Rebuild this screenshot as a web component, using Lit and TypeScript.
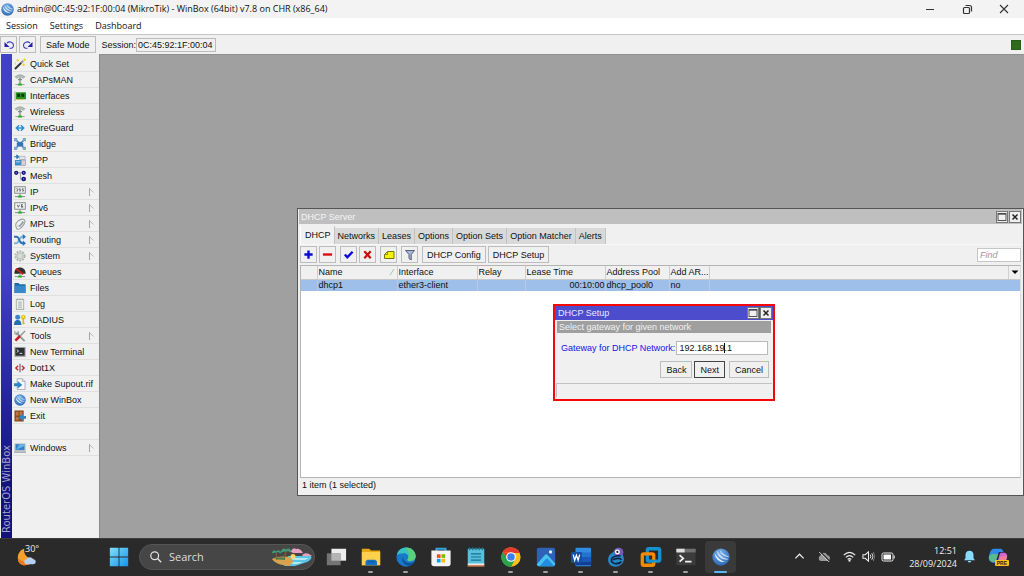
import { LitElement, html, svg, css, TemplateResult } from "lit";
import { customElement, property } from "lit/decorators.js";
import { classMap } from "lit/directives/class-map.js";

/* ---------- icon drawings, keyed by name: [viewBox size, shapes] ---------- */
const antenna = svg`<path d="M2.500 4.500Q6.500 1.500 10.500 4.500M1 3.500Q6.500-1.500 12 3.500" fill="none" stroke="#a3afa9" stroke-width="1.500"/><path d="M4.500 6.500q2-2 4 0M6.500 4v7" fill="none" stroke="#7f8c85" stroke-width="1.400"/><path d="M1.500 11.500h10" stroke="#8fa097" stroke-width="1"/><path d="M4.500 10.300h4v2.200h-4z" fill="#2db01f"/>`;
const ipBase = svg`<rect x=".8" y=".8" width="11.400" height="7" fill="#f4f6f5" stroke="#7b8781"/><path d="M6.500 8v3M1 11.500h11" stroke="#7b8781"/><path d="M4.500 10.300h4v2.200h-4z" fill="#2db01f"/>`;
const disc = svg`<defs><radialGradient id="dg" cx=".45" cy=".3" r=".75"><stop offset="0" stop-color="#7db4ec"/><stop offset="1" stop-color="#2464b4"/></radialGradient></defs><circle cx="12" cy="12" r="11.500" fill="url(#dg)"/><path d="M3.500 6.500C4 14 10 20 19 18.500c-6-.5-12-5-15.500-12z" fill="#eaf3fc"/><path d="M7 4.500c1 7 6 11 14 10.500-6-1-11-4.500-14-10.500zM11 3.500c1 4.500 5 7.500 11 8-5-1.500-9-4.500-11-8z" fill="#d4e5f7" stroke="#d4e5f7" stroke-width=".6"/>`;

const ICONS: Record<string, [number, TemplateResult | ReturnType<typeof svg>]> = {
  wand: [13, svg`<path d="M1 12L8 5" stroke="#333" stroke-width="2.200"/><path d="M7.500 5.500L10 3" stroke="#999" stroke-width="2.200"/><path d="M4 1v3M2.500 2.500h3M10.500 6v3M9 7.500h3M11.500.5v3M10 2h3M1.500 5v2" stroke="#e8d219" stroke-width="1"/>`],
  antenna: [13, antenna],
  nic: [13, svg`<path d="M1 1.500v10.500" stroke="#b9bfba" stroke-width="1.500"/><rect x="2" y="2.500" width="11" height="7.500" fill="#23951c"/><rect x="3.500" y="4" width="3" height="3.500" fill="#0b3b0b"/><rect x="8" y="4" width="3" height="3.500" fill="#0b3b0b"/><path d="M3 10.200h7" stroke="#d0b73c"/>`],
  arrows: [13, svg`<path d="M5.500 3.500L2.500 6.500l3 3M7.500 3.500l3 3-3 3M3 6.500h7" fill="none" stroke="#2c8fd6" stroke-width="1.600"/>`],
  bridge: [13, svg`<path d="M1.500 1.500l10 10M11.500 1.500l-10 10" stroke="#4a88bd" stroke-width="1.700"/><path d="M0 0h3.500v3.500H0zM9.500 0H13v3.500H9.500zM0 9.500h3.500V13H0zM9.500 9.500H13V13H9.500z" fill="#7ba9cf"/><path d="M3 5.500L6.500 4 10 5.500v3L6.500 9.500 3 8z" fill="#2f76b4"/>`],
  ppp: [13, svg`<path d="M0 3h4M3 1l2.500 2L3 5z" fill="#2a77b5" stroke="#2a77b5"/><path d="M6 2.500h6V6H6z" fill="#e3e7ea" stroke="#98a3ab" stroke-width=".7"/><rect x="1" y="6.500" width="6.500" height="6" fill="#3b8bc6"/><path d="M2 8.500h4.500" stroke="#bfe0f5"/><rect x="8" y="6.500" width="4.500" height="6" fill="#cdd3d7" stroke="#8d989f" stroke-width=".7"/>`],
  mesh: [13, svg`<path d="M3 3h7M7 3v7h3" fill="none" stroke="#888" stroke-width=".8"/><g fill="#12127e"><circle cx="2.400" cy="3" r="2.300"/><circle cx="10.500" cy="3" r="2.300"/><circle cx="10.500" cy="9.800" r="2.500"/></g><g fill="#8a93d8"><circle cx="2.400" cy="3" r=".8"/><circle cx="10.500" cy="3" r=".8"/><circle cx="10.500" cy="9.800" r=".8"/></g>`],
  ip: [13, svg`${ipBase}<path d="M2.500 3H4v2.500H2.500M5.500 5.500H7.200V4.200H5.700V3h1.500M8.700 5.500h1.600V4.200H8.900V3h1.500" fill="none" stroke="#555" stroke-width=".8"/>`],
  ipv6: [13, svg`${ipBase}<path d="M3.500 3l1.200 2.700L6 3M9.500 2.700H8v3h1.500V4.300H8" fill="none" stroke="#444" stroke-width=".8"/>`],
  mpls: [13, svg`<path d="M2 8.500C1 5 7 0 10.500 1.500S10 9.500 6.500 11.500 2.500 11 2 8.500zM4 9c1.500 0 5-3 5.500-5.500M6 9.500l4.500-5" fill="none" stroke="#97a39c" stroke-width="1.200"/>`],
  routing: [13, svg`<path d="M0 10h2.500C6 10 5 3 9 3h1" fill="none" stroke="#7db3da" stroke-width="2"/><path d="M0 3h3c3 0 2 7 6 7h1" fill="none" stroke="#2873b5" stroke-width="2"/><path d="M9.500 0L13 3 9.500 6zM9.500 7l3.500 3-3.500 3z" fill="#2873b5"/>`],
  gear: [13, svg`<circle cx="6.500" cy="6.500" r="5" fill="none" stroke="#a9b4ad" stroke-width="2" stroke-dasharray="2 1.200"/><circle cx="6.500" cy="6.500" r="3.500" fill="#dce1de" stroke="#a9b4ad"/><circle cx="6.500" cy="6.500" r="1.300" fill="#fff" stroke="#a9b4ad" stroke-width=".6"/>`],
  queues: [13, svg`<path d="M.5 8.500C0 4 3 1.500 6.500 1.500S13 4 12.500 8.500z" fill="#2f2f31"/><path d="M2 3l8 6" stroke="#c2241c" stroke-width="2.200"/><path d="M6.500 8v3M1 11.500h11" stroke="#7d8984"/><path d="M4.500 10.300h4v2.200h-4z" fill="#2db01f"/>`],
  folder: [13, svg`<path d="M.5 1h4.500l1 1.500h6.500V12H.5z" fill="#1c6aa8"/><path d="M.5 4h12v8H.5z" fill="#3a88c8"/>`],
  log: [13, svg`<rect x="2.500" y="1.500" width="8" height="11" fill="#eef1ef" stroke="#a3ada7"/><path d="M4.500 4.500h4M4.500 6.500h4M4.500 8.500h4M4.500 10.500h4" stroke="#8d9a92" stroke-width=".8"/><path d="M4 0v2.500M6.500 0v2.500M9 0v2.500" stroke="#a3ada7" stroke-width=".8"/>`],
  radius: [13, svg`<circle cx="4" cy="3.500" r="2.700" fill="#3a87c8"/><path d="M0 12c0-4 1.500-5.500 4-5.500S8 8 8 12z" fill="#2470b0"/><circle cx="10" cy="3.500" r="2.600" fill="#dcca1d"/><circle cx="10" cy="3" r=".8" fill="#fff"/><path d="M10 5v6M10 10h1.500" stroke="#c9b410" stroke-width="1.400"/>`],
  tools: [13, svg`<path d="M2.500 3l9 9" stroke="#8f9a96" stroke-width="2"/><path d="M1 1v3l2 1 2-2-1-2" fill="none" stroke="#8f9a96" stroke-width="1.200"/><path d="M12 1L6 7" stroke="#8a9490" stroke-width="1.400"/><path d="M6.500 6.500l-5 5" stroke="#c8202a" stroke-width="2.800"/>`],
  terminal: [13, svg`<rect x=".3" y="1" width="12.400" height="11" fill="#aab0b0"/><rect x="1.500" y="2" width="10" height="8.500" fill="#2d3030"/><path d="M3 4l2 1.500L3 7M6 8h3" fill="none" stroke="#fff" stroke-width=".9"/>`],
  dot1x: [13, svg`<path d="M4.500 4L2 6.500 4.500 9M8.500 4L11 6.500 8.500 9" fill="none" stroke="#c1282d" stroke-width="1.500"/><path d="M6.500 2v9" stroke="#666" stroke-width="1.300"/>`],
  supout: [13, svg`<path d="M3.500.8h5.500l3 3v8.700H3.500z" fill="#f6f8f9" stroke="#9aa5ad" stroke-width=".9"/><path d="M9 .8v3h3" fill="none" stroke="#9aa5ad" stroke-width=".8"/><path d="M0 5.800h4V3.300L9 7.500 4 11.500V9H0z" fill="#2b86c6"/>`],
  disc: [24, disc],
  exit: [13, svg`<rect x=".5" y=".5" width="10" height="12" fill="#8a4a22"/><path d="M2 2h3v4H2zM6 2h3v4H6zM2 7.500h3V11H2z" fill="#b97646"/><path d="M13 6.500H9.500V4L5 8l4.500 4V9.500H13z" fill="#2b86c6"/>`],
  monitor: [13, svg`<rect x=".5" y="1.500" width="12" height="8.500" fill="#b5bdc2"/><rect x="1.800" y="2.500" width="9.400" height="6" fill="#2883c8"/><path d="M2 8.500l4-6h5v2z" fill="#6ab4e6"/><path d="M0 11h13" stroke="#9da6ab" stroke-width="1.500"/>`],
  undo: [12, svg`<path d="M4 4C6.500 1.800 10.500 3.200 10.500 6.200S8 9.500 6.500 9.200" fill="none" stroke="#3a3ab4" stroke-width="1.100"/><path d="M1.500 3v5h5z" fill="#2222a8"/>`],
  redo: [12, svg`<path d="M8 4C5.500 1.800 1.500 3.200 1.500 6.200S4 9.500 5.500 9.200" fill="none" stroke="#3a3ab4" stroke-width="1.100"/><path d="M10.500 3v5h-5z" fill="#2222a8"/>`],
  plus: [12, svg`<path d="M6 1.500v9M1.500 6h9" stroke="#0a0ad0" stroke-width="2.600"/>`],
  minus: [12, svg`<path d="M1 6h10" stroke="#d40f0f" stroke-width="2.600"/>`],
  check: [12, svg`<path d="M2 6l2.700 3L10.500 3" fill="none" stroke="#0a0ae0" stroke-width="2.600"/>`],
  cross: [12, svg`<path d="M2.500 2.500l7 7.500M9.500 2.500l-7 7.500" stroke="#cc0d0d" stroke-width="2.400"/>`],
  note: [12, svg`<path d="M1.500 9.500V5.500l3-3h6.500v7z" fill="#f7f300" stroke="#77741c"/><path d="M1.500 5.500h3v-3" fill="none" stroke="#77741c" stroke-width=".8"/>`],
  filter: [12, svg`<path d="M1.500 1.500h9L7.200 5.500v5.500L5 9.500v-4z" fill="#a9b6df" stroke="#59606e" stroke-width="1"/>`],
  max: [10, svg`<rect x="1" y="1.500" width="8" height="7" fill="none" stroke="#444" stroke-width=".9"/><path d="M1 2h8" stroke="#444" stroke-width="1.300"/>`],
  close: [10, svg`<path d="M2.500 2.500l5 5M7.500 2.500l-5 5" stroke="#222" stroke-width="1.500"/>`],
  down: [10, svg`<path d="M1.500 3.500h7L5 7z" fill="#000"/>`],
  winmin: [12, svg`<path d="M2 6.500h8" stroke="#333"/>`],
  winmax: [12, svg`<rect x="2.500" y="4.500" width="6" height="6" rx="1" fill="none" stroke="#333" stroke-width="1.200"/><path d="M4.500 2.500h4a2 2 0 012 2v4" fill="none" stroke="#333" stroke-width="1.200"/>`],
  winclose: [12, svg`<path d="M2 2l8 8M10 2l-8 8" stroke="#333" stroke-width="1.100"/>`],
  sub: [8, svg`<path d="M2.500 0v8" stroke="#a4a4a4" stroke-width="1"/><path d="M2.500.5L6.500 4.500" stroke="#b8b8b8" stroke-width=".9"/>`],
  sort: [8, svg`<path d="M2 7L6 1" stroke="#aaa" stroke-width=".8"/>`],
  weather: [24, svg`<path d="M9 3C8 9 12 14 19 14c-1 5-5 7-9 7C5 21 2 17.500 2 13S4.500 4 9 3z" fill="#f5a02c"/><path d="M2 13c0 5 3 8 8 8 4 0 8-2 9-7-4 4-11 5-17-1z" fill="#ec7a1c"/><path d="M11 20a2.800 2.800 0 01.5-5.500c1-3 6-3 7 0 3.500-.5 4.500 5.500 0 5.500z" fill="#b5d0f2"/>`],
  start: [24, svg`<defs><linearGradient id="wg" x1="0" y1="0" x2="1" y2="1"><stop offset="0" stop-color="#7fe0fb"/><stop offset="1" stop-color="#1593ea"/></linearGradient></defs><path d="M2 2h9.500v9.500H2zM12.500 2H22v9.500h-9.500zM2 12.500h9.500V22H2zM12.500 12.500H22V22h-9.500z" fill="url(#wg)"/>`],
  search: [16, svg`<circle cx="7" cy="7" r="4.800" fill="none" stroke="#e4e4e4" stroke-width="1.500"/><path d="M10.500 10.500L15 15" stroke="#e4e4e4" stroke-width="1.600"/>`],
  taskview: [24, svg`<rect x="7" y="3" width="16" height="13" fill="#eee"/><rect x="2" y="8" width="15" height="13" fill="#7c7c7c" opacity=".9"/><path d="M7 8h10v8H7z" fill="#b4b4b4"/>`],
  explorer: [24, svg`<path d="M2 3h8l2 2h10v16H2z" fill="#e9a90d"/><path d="M2 6.500h20V21H2z" fill="#ffd04c"/><path d="M6 21v-4.500l2-1.500h8.500l2 1.500V21z" fill="#1273c4"/><path d="M9 17.500h6.500" stroke="#0a4f92"/>`],
  edge: [24, svg`<circle cx="12" cy="12" r="10.500" fill="#1a78c9"/><path d="M2 10C3 4 8 1.500 12 1.500c6.500 0 10.500 4.500 10.500 9.500 0 4-3 5.500-6.500 5.500-2 0-3-1-2-2.500 2-3-1-6-4-6-4 0-7 1-8 2z" fill="#37c2c4"/><path d="M12 1.500c6.500 0 10.500 4.500 10.500 9.500 0 4-3 5.500-6.500 5.500-2 0-3-1-2-2.500 3-5 0-9-2-12.500z" fill="#5bd07c"/><path d="M8.500 12c-2 5 2 9.500 8 9.500 2-1 4-2 4.500-4-6 3-12 0-12.500-5.500z" fill="#0c4f9b"/>`],
  store: [24, svg`<path d="M7 6V3h10v3" fill="none" stroke="#35a6dd" stroke-width="2"/><path d="M1.500 5h21v14a3 3 0 01-3 3h-15a3 3 0 01-3-3z" fill="#f3f3f3"/><path d="M7.500 9h4v4h-4z" fill="#f25022"/><path d="M12.500 9h4v4h-4z" fill="#7fba00"/><path d="M7.500 14h4v4h-4z" fill="#00a4ef"/><path d="M12.500 14h4v4h-4z" fill="#ffb900"/>`],
  notepad: [24, svg`<path d="M3 3h18v17H3z" fill="#58c0dc"/><path d="M3 19h18v3H3z" fill="#e8e8e8"/><path d="M3 21h18v1.500H3z" fill="#c96a32"/><path d="M5 1.500v3M8.500 1.500v3M12 1.500v3M15.500 1.500v3M19 1.500v3" stroke="#1c7892" stroke-width="1.600"/><path d="M6.500 8.500h11M6.500 12h11M6.500 15.500h11" stroke="#14708c" stroke-width="1.300"/>`],
  chrome: [24, svg`<circle cx="12" cy="12" r="10.500" fill="#fbc116"/><path d="M3 6.500A10.500 10.500 0 0121.500 7.500H12z" fill="#e33b2e"/><path d="M3 6.500A10.500 10.500 0 0012 22.500l4.300-8-8.500 0z" fill="#2ba24c"/><path d="M3 6.500l5 8 4-7z" fill="#e33b2e"/><path d="M3 6.500A10.500 10.500 0 0012 22.500l3-6-7-2z" fill="#2ba24c"/><circle cx="12" cy="12" r="5.300" fill="#fff"/><circle cx="12" cy="12" r="4.100" fill="#3e7fee"/>`],
  photos: [24, svg`<rect x="2" y="2" width="20" height="20" rx="2" fill="#2d62b5"/><path d="M2 20L11 9.500q1.200-1 2.400 0L22 19v1a2 2 0 01-2 2H4a2 2 0 01-2-2z" fill="#47c2f1"/><path d="M5 22l7-8q1-1 2 0l7 8z" fill="#238ee0"/><circle cx="17" cy="6.500" r="1.800" fill="#e9f4ff"/>`],
  word: [24, svg`<rect x="6" y="2" width="17" height="20" rx="1" fill="#2f8de4"/><path d="M6 7h17v5H6z" fill="#2174d0"/><path d="M6 12h17v5H6z" fill="#185abd"/><path d="M6 17h17v4H6z" fill="#123f8f"/><rect x="1" y="6.500" width="12" height="12" rx="1" fill="#174ea6"/><path d="M3.500 9.500l1.600 6L7 10l1.900 5.500 1.600-6" fill="none" stroke="#fff" stroke-width="1.400"/>`],
  gecko: [24, svg`<path d="M10 5C12 1 18 1 19.500 5c1 2 0 3.500 0 5 3 5 0 12-7.500 12.500S2 17 4 11.500C5.500 8 8.500 8 10 5z" fill="#2587c4"/><path d="M10 5C12 1 18 1 19.500 5c1 2 0 3.500 0 5l-9 0z" fill="#7a57b8"/><circle cx="13.500" cy="6.500" r="2.700" fill="#fff"/><circle cx="13.500" cy="6.500" r="1.200" fill="#222"/><path d="M17 11c-5-1-10 1-10 4.500s6 5 10 2.500M9 15c3-2 8-2 9 0M12 19c3 0 5-1 6-2" fill="none" stroke="#14213f" stroke-width="1.700"/>`],
  vmware: [24, svg`<rect x="8" y="3" width="13.500" height="13.500" rx="1.500" fill="none" stroke="#1591cf" stroke-width="3.600"/><rect x="2.500" y="8.500" width="12.500" height="12.500" rx="1.500" fill="none" stroke="#f38b00" stroke-width="3.600"/><path d="M9.800 16.500h7" fill="none" stroke="#1591cf" stroke-width="3"/>`],
  cmd: [24, svg`<rect x="1.500" y="3" width="21" height="18" rx="1" fill="#3c3c3c"/><path d="M1.500 3h21v4h-21z" fill="#707070"/><path d="M1.500 3h9v4h-9z" fill="#dedede"/><path d="M5 10l4 3.500L5 17M11 17h7" fill="none" stroke="#f2f2f2" stroke-width="1.900"/>`],
  chevron: [12, svg`<path d="M1.500 8L6 3.500 10.500 8" fill="none" stroke="#eee" stroke-width="1.300"/>`],
  cloud: [14, svg`<path d="M3.500 11a3 3 0 010-5.500C4.500 2 9 2 10.200 5.200c3.800.3 3.600 5.800 0 5.800z" fill="#9a9a9a"/><path d="M3 1.500l10 10" stroke="#2a2a2b" stroke-width="1.200"/><path d="M2.200 2l10 10" stroke="#ddd" stroke-width=".9"/>`],
  wifi: [14, svg`<path d="M.8 5.500Q7-.5 13.200 5.500M3 8Q7 4 11 8M5 10.200q2-2 4 0" fill="none" stroke="#eee" stroke-width="1.200"/><circle cx="7" cy="11.500" r="1.200" fill="#eee"/>`],
  volume: [14, svg`<path d="M1 5h2.500L7 2v10L3.500 9H1z" fill="none" stroke="#eee" stroke-width="1.100"/><path d="M8.800 5q1.400 2 0 4M10.600 3.500q2.400 3.500 0 7" fill="none" stroke="#eee" stroke-width="1"/><path d="M12.300 2q2.500 5 0 10" fill="none" stroke="#888" stroke-width=".9"/>`],
  battery: [14, svg`<rect x="1" y="3" width="11" height="8" rx="1.500" fill="none" stroke="#eee" stroke-width="1"/><rect x="2.500" y="4.500" width="7.500" height="5" fill="#fff"/><path d="M13.200 5.500v3" stroke="#eee"/>`],
  bell: [14, svg`<path d="M7 .8c3 0 4.300 2.200 4.300 4.500V8.500L12.800 11H1.200L2.700 8.500V5.300C2.700 3 4 .8 7 .8zM5 11.800h4q-.5 1.700-2 1.700T5 11.800z" fill="#86dcfb"/>`],
  copilot: [24, svg`<path d="M7 2h8c2 0 3 1.500 3.500 4H13L9.500 17C8.500 21 1 18 1 14 1 9 3 2 7 2z" fill="#2f8ae8"/><path d="M1 12c0 6 6 8 8.500 4.500L12 9C7 7 2 8 1 12z" fill="#5cb98c"/><path d="M16.500 7H20c5 1 2.500 9 0 12h-9l3-10c.4-1.200 1-2 2.500-2z" fill="#d264d8"/><path d="M14 12l9-2c0 3-1.500 6-3 9h-7z" fill="#ee7f9b"/>`],
};

const icon = (name: string, size: number) => {
  const [box, shapes] = ICONS[name];
  return html`<svg class="ico" width=${size} height=${size} viewBox="0 0 ${box} ${box}" aria-hidden="true">${shapes}</svg>`;
};

const shared = css`
  * { box-sizing: border-box; }
  .ico { display: block; flex: none; }
  button, input {
    font: inherit;
    color: inherit;
    margin: 0;
    padding: 0;
    border-radius: 0;
    outline: none;
  }
  button { border: 0; background: none; }
  .row { display: flex; align-items: center; }
  .grow { flex: 1; }
  .btn {
    display: flex;
    align-items: center;
    justify-content: center;
    height: 17px;
    min-width: 17px;
    border: 1px solid #bdbdbd;
    background: #f0f0f0;
    white-space: nowrap;
  }
  .caption-btn {
    display: flex;
    align-items: center;
    justify-content: center;
    width: 12px;
    height: 12px;
    border: 1px solid #777;
    background: #efefef;
  }
`;

@customElement("side-menu")
class SideMenu extends LitElement {
  static styles = [shared, css`
    :host { display: flex; flex: none; width: 100px; background: #f0f0f0; border-right: 1px solid #8a8a8a; padding-left: 1px; }
    .brand {
      width: 11px;
      flex: none;
      padding-top: 5px;
      background: linear-gradient(to top, #4141c4 0, #4141c4 45%, #12127e 90%);
      color: #a5a5c8;
      font: 10px/11px "DejaVu Sans", sans-serif;
      writing-mode: vertical-rl;
      transform: rotate(180deg);
      white-space: nowrap;
    }
    nav { flex: 1; padding: 2px 0 0 1px; display: flex; flex-direction: column; }
    a {
      display: flex;
      align-items: center;
      gap: 4px;
      height: 16px;
      padding: 0 4px 0 1px;
      border-bottom: 1px solid #e0e0e0;
      color: #111;
      text-decoration: none;
      white-space: nowrap;
    }
    .spacer { height: 16px; border-bottom: 1px solid #e0e0e0; }
  `];

  private items: [string, string, boolean?][] = [
    ["wand", "Quick Set"], ["antenna", "CAPsMAN"], ["nic", "Interfaces"], ["antenna", "Wireless"],
    ["arrows", "WireGuard"], ["bridge", "Bridge"], ["ppp", "PPP"], ["mesh", "Mesh"],
    ["ip", "IP", true], ["ipv6", "IPv6", true], ["mpls", "MPLS", true], ["routing", "Routing", true],
    ["gear", "System", true], ["queues", "Queues"], ["folder", "Files"], ["log", "Log"],
    ["radius", "RADIUS"], ["tools", "Tools", true], ["terminal", "New Terminal"], ["dot1x", "Dot1X"],
    ["supout", "Make Supout.rif"], ["disc", "New WinBox"], ["exit", "Exit"], ["", ""], ["monitor", "Windows", true],
  ];

  render() {
    return html`
      <div class="brand">RouterOS WinBox</div>
      <nav>
        ${this.items.map(([ic, label, sub]) => label
          ? html`<a href="#">${icon(ic, 12)}<span class="grow">${label}</span>${sub ? icon("sub", 8) : null}</a>`
          : html`<div class="spacer"></div>`)}
      </nav>`;
  }
}

@customElement("dhcp-window")
class DhcpWindow extends LitElement {
  static styles = [shared, css`
    :host { display: flex; flex-direction: column; background: #f0f0f0; border: 1px solid #555; padding: 0 2px; }
    .title { height: 15px; margin: 0 -1px; padding: 0 1px 0 2px; gap: 1px; background: #bfbfbf; color: #f4f4f4; }
    .tabs { display: flex; align-items: flex-end; height: 20px; }
    .tab { height: 16px; padding: 0 3px 0 3px; background: #d9d9d9; border-right: 1px solid #c2c2c2; }
    .tab.active { height: 18px; padding: 0 3px 0 4px; background: #f0f0f0; border-left: 1px solid #fff; }
    .tools { height: 21px; padding: 0 0 1px; gap: 2px; border-top: 1px solid #f8f8f8; }
    .gap { margin-left: 2px; }
    .wide { padding: 0 4px; }
    .find { width: 44px; height: 14px; border: 1px solid #c6c6c6; background: #fff; padding: 0 2px; }
    .find::placeholder { color: #999; font-style: italic; opacity: 1; }
    .grid { flex: 1; background: #fff; border: 1px solid #b4b4b4; border-right-color: #ddd; }
    table { width: 100%; table-layout: fixed; border-collapse: collapse; }
    th { height: 13px; padding: 0 1px; font-weight: normal; text-align: left; background: #f0f0f0; border-right: 1px solid #cfcfcf; border-bottom: 1px solid #c8c8c8; white-space: nowrap; }
    td { height: 12px; padding: 0 1px; background: #9dbfe9; border-right: 1px solid #b3cbe9; line-height: 11px; white-space: nowrap; }
    th .row { justify-content: space-between; }
    td:last-child, th:last-child { border-right: 0; }
    td:nth-last-child(2) { border-right: 0; }
    .num { text-align: right; padding-right: 0; }
    .mark { width: 16px; } .c80 { width: 80px; } .c48 { width: 48px; } .c64 { width: 64px; } .c40 { width: 40px; } .c12 { width: 12px; }
    .status { height: 17px; line-height: 15px; padding-left: 2px; }
  `];

  render() {
    const tabs = ["DHCP", "Networks", "Leases", "Options", "Option Sets", "Option Matcher", "Alerts"];
    return html`
      <div class="title row"><span class="grow">DHCP Server</span>
        <button class="caption-btn" aria-label="Maximize">${icon("max", 10)}</button>
        <button class="caption-btn" aria-label="Close">${icon("close", 10)}</button>
      </div>
      <div class="tabs">${tabs.map((t, i) => html`<button class=${classMap({ tab: true, active: i === 0 })}>${t}</button>`)}</div>
      <div class="tools row">
        <button class="btn" aria-label="Add">${icon("plus", 11)}</button>
        <button class="btn" aria-label="Remove">${icon("minus", 11)}</button>
        <button class="btn gap" aria-label="Enable">${icon("check", 11)}</button>
        <button class="btn" aria-label="Disable">${icon("cross", 11)}</button>
        <button class="btn gap" aria-label="Comment">${icon("note", 12)}</button>
        <button class="btn gap" aria-label="Filter">${icon("filter", 12)}</button>
        <button class="btn wide gap">DHCP Config</button>
        <button class="btn wide">DHCP Setup</button>
        <span class="grow"></span>
        <input class="find" placeholder="Find" aria-label="Find">
      </div>
      <div class="grid">
        <table>
          <colgroup><col class="mark"><col class="c80"><col class="c80"><col class="c48"><col class="c80"><col class="c64"><col class="c40"><col><col class="c12"></colgroup>
          <thead><tr><th></th><th><div class="row">Name ${icon("sort", 8)}</div></th><th>Interface</th><th>Relay</th><th>Lease Time</th><th>Address Pool</th><th>Add AR...</th><th></th><th>${icon("down", 10)}</th></tr></thead>
          <tbody><tr><td></td><td>dhcp1</td><td>ether3-client</td><td></td><td class="num">00:10:00</td><td>dhcp_pool0</td><td>no</td><td></td><td></td></tr></tbody>
        </table>
      </div>
      <div class="status">1 item (1 selected)</div>`;
  }
}

@customElement("setup-dialog")
class SetupDialog extends LitElement {
  static styles = [shared, css`
    :host { display: flex; flex-direction: column; background: #f0f0f0; border: 2px solid #f70808; }
    .title { height: 14px; padding: 0 1px 0 3px; gap: 1px; background: #4c4ccc; color: #e8e8fa; }
    .step { margin: 1px 2px 0; height: 12px; line-height: 13px; padding-left: 2px; background: #9f9f9f; color: #f2f2f2; }
    .field { margin: 8px 5px 0 6px; gap: 1px; color: #1414e6; white-space: nowrap; }
    .box { position: relative; flex: 1; display: flex; }
    .box input { width: 100%; min-width: 0; height: 14px; border: 1px solid #b9b9b9; background: #fff; color: #111; padding: 0 2px; }
    .caret { position: absolute; left: 48px; top: 2px; width: 1px; height: 10px; background: #000; }
    .actions { margin: 6px 4px 0; gap: 2px; justify-content: flex-end; }
    .actions .btn { padding: 0 5px; }
    .actions .next { border-color: #444; }
    .actions .cancel { padding: 0 5px; margin-left: 2px; }
    .foot { flex: 1; margin: 5px 1px 2px; border: 1px solid #c2c2c2; border-right: 0; border-bottom: 0; }
  `];

  render() {
    return html`
      <div class="title row"><span class="grow">DHCP Setup</span>
        <button class="caption-btn" aria-label="Maximize">${icon("max", 10)}</button>
        <button class="caption-btn" aria-label="Close">${icon("close", 10)}</button>
      </div>
      <div class="step">Select gateway for given network</div>
      <div class="field row">
        <label for="gateway">Gateway for DHCP Network:</label>
        <div class="box"><input id="gateway" .value=${"192.168.19.1"}><span class="caret"></span></div>
      </div>
      <div class="actions row">
        <button class="btn">Back</button><button class="btn next">Next</button><button class="btn cancel">Cancel</button>
      </div>
      <div class="foot"></div>`;
  }
}

@customElement("task-bar")
class TaskBar extends LitElement {
  static styles = [shared, css`
    :host { display: flex; flex: none; align-items: center; height: 38px; padding: 0 16px 2px 0; background: #2a2a2b; border-top: 1px solid #3c3c3c; color: #eee; font-family: "Open Sans", "Noto Sans", sans-serif; }
    .weather { display: flex; width: 101px; padding-left: 16px; }
    .weather span { font-size: 9px; line-height: 10px; margin-left: -13px; margin-top: -2px; }
    .app { display: flex; align-items: center; justify-content: center; position: relative; width: 35px; height: 32px; border-radius: 4px; }
    .app.current { width: 31px; margin: 0 2px; background: #3a3a3b; }
    .app.open::after { content: ""; position: absolute; bottom: 0; left: 15px; width: 5px; height: 2px; border-radius: 1px; background: #a0a0a0; }
    .app.current::after { left: 9px; width: 13px; background: #54b8f4; }
    .search { width: 176px; height: 26px; margin: 0 3px; padding: 0 1px 0 9px; gap: 7px; border-radius: 13px; background: #464647; border: 1px solid #565657; font-size: 11px; }
    .search input { flex: 1; min-width: 0; border: 0; background: none; }
    .search input::placeholder { color: #ddd; opacity: 1; }
    .tray { gap: 6px; }
    .tray .first { margin-right: 6px; }
    .tray .cloud { margin-right: 6px; }
    .clock { font-size: 9px; line-height: 13px; text-align: right; margin-left: 8px; }
    .pro { position: relative; margin-left: 6px; }
    .tag { position: absolute; right: -1px; bottom: 1px; padding: 0 2px; border-radius: 1px; background: #f6c514; color: #222; font: bold 5px/6px "Liberation Sans", sans-serif; }
  `];

  private apps: [string, string, boolean][] = [
    ["taskview", "Task View", false], ["explorer", "File Explorer", true], ["edge", "Edge", true], ["store", "Store", false],
    ["notepad", "Notepad", false], ["chrome", "Chrome", true], ["photos", "Photos", true], ["word", "Word", true],
    ["gecko", "Editor", true], ["vmware", "Virtual machines", true], ["cmd", "Terminal", true], ["disc", "WinBox", true],
  ];

  render() {
    return html`
      <div class="weather">${icon("weather", 22)}<span>30°</span></div>
      <button class="app" aria-label="Start">${icon("start", 22)}</button>
      <div class="search row">${icon("search", 13)}<input placeholder="Search" aria-label="Search">
        <svg class="ico" width="42" height="20" viewBox="0 0 42 20" aria-hidden="true">
          <path d="M17 9h23q2 3-4 6l-12 4H13z" fill="#59c5e8"/><path d="M20 11h18l-4 2H22zM20 15h12l-5 2h-9z" fill="#b6e9ee"/>
          <path d="M1 12c6-3 15-3 18-1s5 4 1 6 2 2-2 2C9 18 4 16 1 12z" fill="#d9a24f"/><circle cx="22" cy="9.500" r="2.500" fill="#ffd75a"/>
          <path d="M6 13l-1-8M13 12l2-8" stroke="#8b5a34" stroke-width="1.200"/>
          <path d="M1 6q2-4 4-1q3-3 5 1q-3-2-5-1q-2 0-4 1zM10 5q2-5 5-2q4-3 5 2q-3-2-5-1q-2 0-5 1z" fill="#3f9a78" stroke="#3f9a78"/>
          <path d="M3 12q5-3 11-1v2z" fill="#477d4c"/>
          <path d="M20 4q2-4 5-2q4-1 7 4h-8q-4 0-4-2zM31 8q3-3 7-1l3 2h-9z" fill="#e9a3c0"/>
        </svg>
      </div>
      ${this.apps.map(([ic, label, open]) => html`<button aria-label=${label} class=${classMap({ app: true, open, current: ic === "disc" })}>${icon(ic, ic === "disc" ? 18 : 22)}</button>`)}
      <span class="grow"></span>
      <div class="tray row">
        <span class="first">${icon("chevron", 11)}</span><span class="cloud">${icon("cloud", 14)}</span>
        ${icon("wifi", 13)}${icon("volume", 13)}${icon("battery", 14)}
        <div class="clock">12:51<br>28/09/2024</div>
        ${icon("bell", 13)}
        <span class="pro">${icon("copilot", 20)}<span class="tag">PRE</span></span>
      </div>`;
  }
}

@customElement("app-root")
class AppRoot extends LitElement {
  @property() device = "0C:45:92:1F:00:04";

  static styles = [shared, css`
    :host { display: flex; flex-direction: column; height: 100vh; overflow: hidden; background: #f0f0f0; color: #111; font: 9px/12px "Liberation Sans", Arial, sans-serif; }
    .titlebar { height: 18px; padding: 0 14px 0 1px; gap: 3px; background: #f3f3f3; font: 9px/16px "Open Sans", "Noto Sans", sans-serif; }
    .controls { gap: 25px; }
    .menubar { height: 17px; padding: 0 6px; gap: 12px; background: #fff; border-bottom: 1px solid #c4c4c4; font: 9px/16px "Open Sans", "Noto Sans", sans-serif; }
    .toolbar { height: 19px; padding: 0 3px 0 0; gap: 2px; }
    .safe { padding: 0 5px; margin: 0 4px 0 2px; }
    .session input { width: 80px; height: 14px; border: 1px solid #bcbcbc; background: #f0f0f0; padding: 0 1px; }
    .led { width: 10px; height: 10px; background: #2f6b1b; border: 1px solid #285a18; }
    .body { flex: 1; display: flex; min-height: 0; }
    .desk { flex: 1; position: relative; background: #a0a0a0; border-top: 1px solid #8f8f8f; }
    dhcp-window { position: absolute; left: 197px; right: 0; top: 153px; height: 288px; }
    setup-dialog { position: absolute; left: 453px; top: 249px; width: 222px; height: 97px; }
  `];

  render() {
    return html`
      <header class="titlebar row">${icon("disc", 13)}
        <span class="grow">admin@${this.device} (MikroTik) - WinBox (64bit) v7.8 on CHR (x86_64)</span>
        <div class="controls row">
          <button aria-label="Minimize">${icon("winmin", 12)}</button>
          <button aria-label="Restore">${icon("winmax", 12)}</button>
          <button aria-label="Close">${icon("winclose", 12)}</button>
        </div>
      </header>
      <div class="menubar row"><button>Session</button><button>Settings</button><button>Dashboard</button></div>
      <div class="toolbar row">
        <button class="btn" aria-label="Undo">${icon("undo", 12)}</button>
        <button class="btn" aria-label="Redo">${icon("redo", 12)}</button>
        <button class="btn safe">Safe Mode</button>
        <div class="session row"><label for="session">Session:</label><input id="session" readonly .value=${this.device}></div>
        <span class="grow"></span><span class="led"></span>
      </div>
      <div class="body">
        <side-menu></side-menu>
        <main class="desk"><dhcp-window></dhcp-window><setup-dialog></setup-dialog></main>
      </div>
      <task-bar></task-bar>`;
  }
}
